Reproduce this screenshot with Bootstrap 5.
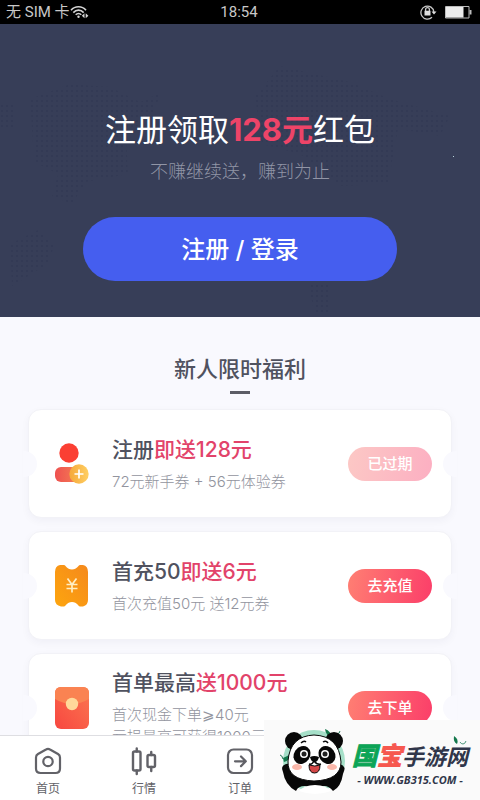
<!DOCTYPE html>
<html lang="zh-CN">
<head>
<meta charset="utf-8">
<meta name="viewport" content="width=device-width, initial-scale=1">
<title>新人限时福利</title>
<link href="https://cdn.jsdelivr.net/npm/bootstrap@5.3.0/dist/css/bootstrap.min.css" rel="stylesheet">
<style>
  body { font-family: Inter, "Noto Sans CJK SC", sans-serif; background: #f9f9fe; color: #50525f; }
  .status-bar { height: 24px; padding: 0 4px 0 6px; background: #000; color: #c8c8c8; font: 15px/24px Roboto, "Noto Sans CJK SC", sans-serif; }
  .status-bar .cell { flex: 1 1 0; }
  .scroller { scrollbar-width: none; min-height: 0; }
  .scroller::-webkit-scrollbar { display: none; }
  .hero { background: #373e58; padding: 83px 0 36px; }
  .hero-map { inset: 0; width: 100%; height: 100%; }
  .hero h1 { font-size: 31px; line-height: 46px; font-weight: 400; color: #fff; }
  .hero h1 strong { color: #ee4468; font-weight: 700; }
  .hero p { font-size: 18px; line-height: 26px; font-weight: 300; color: #9195a6; margin: 6px 0 32px; }
  .btn-login { width: 314px; height: 64px; padding: 2px 0 0; background: #455eef; color: #fff; font-size: 24px; font-weight: 500; }
  .btn-login:hover { background: #3a51d8; color: #fff; }
  .section-title { font-size: 22px; line-height: 32px; font-weight: 500; margin-top: 36px; }
  .title-bar { width: 20px; height: 3px; margin: 6px auto 15px; background: #5c5d66; }
  .offers { padding: 0 28px; gap: 13px; }
  .offer { min-height: 109px; border: 1px solid #f2f2f7; border-radius: 13px; background: #fff; padding: 0 19px 0 25px; box-shadow: 0 3px 8px #2020400a; }
  .offer::before, .offer::after { content: ""; position: absolute; top: 50%; width: 14px; height: 26px; margin-top: -13px; background: #f9f9fe; }
  .offer::before { left: -6px; border-radius: 0 13px 13px 0; }
  .offer::after { right: -6px; border-radius: 13px 0 0 13px; }
  .offer > svg { width: 36px; height: 44px; flex: none; margin-right: 22px; overflow: visible; }
  .offer h3 { font-size: 21px; line-height: 30px; font-weight: 500; margin-bottom: 6px; }
  .offer h3 span { color: #e2436a; }
  .offer p { font-size: 15px; line-height: 22px; font-weight: 300; color: #92949e; margin: 0; }
  .btn-offer { width: 84px; height: 34px; padding: 0; background: linear-gradient(100deg, #ff7f73, #fb3e69); color: #fff; font-size: 15px; line-height: 34px; font-weight: 500; }
  .btn-offer, .btn-offer:hover, .btn-offer:disabled { color: #fff; border: 0; }
  .btn-offer:disabled { background: linear-gradient(100deg, #fcc8c5, #fcafc2); opacity: 1; }
  .tabs { height: 65px; background: #fff; border-top: 1px solid #dedee2; }
  .tabs a { width: 20%; color: #626268; font-size: 12px; line-height: 18px; padding-top: 10px; }
  .tabs svg { width: 30px; height: 30px; margin-bottom: 4px; }
  .site-tag { width: 45%; height: 80px; background: #fafafa; padding-left: 14px; z-index: 2; font-family: "Open Sans", "Noto Sans CJK SC", sans-serif; }
  .site-panda { width: 70px; height: 70px; flex: none; margin-top: 4px; }
  .site-name { font-family: "Noto Sans CJK SC", sans-serif; font-weight: 700; font-style: italic; font-size: 22px; line-height: 34px; color: #30364a; }
  .site-name span { font-size: 25px; -webkit-text-stroke: 1px currentColor; }
  .site-name .g { color: #0ca457; }
  .site-name .r { color: #f6584f; }
  .site-url { font-size: 11px; line-height: 16px; font-weight: 700; font-style: italic; color: #30364a; }
  .site-leaf { width: 16px; height: 12px; right: 12px; top: 14px; }
</style>
<script src="https://cdn.jsdelivr.net/npm/bootstrap@5.3.0/dist/js/bootstrap.bundle.min.js"></script>
</head>
<body>
<div class="d-flex flex-column vh-100 overflow-hidden">
  <header class="status-bar d-flex align-items-center flex-shrink-0">
    <div class="cell d-flex align-items-center"><span>无 SIM 卡</span>
      <svg width="19" height="14" viewBox="0 0 19 14" fill="none" stroke="#d4d4d4" stroke-width="1.6"><path d="M1 5.2C5 .6 12 .6 16 5.2M3.3 7.6c3-3.3 7.400-3.300 10.400 0M5.700 9.800c1.600-1.700 4-1.700 5.600 0"/><circle cx="8.500" cy="11.800" r="1.200" fill="#d4d4d4" stroke="none"/><path d="M14.500 8.200v5l-2.700-2.500zM15.700 8.200v5l2.700-2.500z" fill="#d4d4d4" stroke="none"/></svg>
    </div>
    <div>18:54</div>
    <div class="cell d-flex align-items-center justify-content-end gap-2 pe-1">
      <svg width="17" height="16" viewBox="0 0 17 16" fill="none" stroke="#c8c8c8" stroke-width="1.300"><path d="M12 13.200A6.500 6.500 0 1 1 13.900 8"/><path d="M5.600 7V5.500a1.900 1.900 0 0 1 3.800 0V7"/><path d="M4.500 6.800h6v4.700h-6zM11.500 7.500h5L14 10.500z" fill="#dedede" stroke="none"/></svg>
      <svg width="27" height="13" viewBox="0 0 27 13"><path d="M.5.5h23.500v11.500H.5z" fill="none" stroke="#bbb"/><path d="M1 1h17.500v10.500H1z" fill="#ececec"/><path d="M24.500 4h2v4.500h-2z" fill="#bbb"/></svg>
    </div>
  </header>

  <main class="scroller flex-grow-1 overflow-auto">
    <section class="hero position-relative text-center">
      <svg class="hero-map position-absolute start-0" viewBox="0 0 480 293" preserveAspectRatio="none" aria-hidden="true">
        <defs><pattern id="dots" width="5" height="5" patternUnits="userSpaceOnUse"><path d="M1 1h2v2H1z" fill="#2e3550"/></pattern></defs>
        <path d="M30 75L70 60 110 63 140 78 162 68 150 95 126 108 128 150 86 158 72 180 52 172 58 150 34 138ZM255 72L280 42 350 58 390 75 450 92 440 112 398 105 388 160 340 162 300 130 262 120ZM0 80h16v24H0ZM10 220L38 206 54 222 48 240 12 262ZM308 258h20v30h-14Z" fill="url(#dots)" opacity=".4"/>
        <path d="M453 132h1v1h-1z" fill="#b9d5dc"/>
      </svg>
      <div class="position-relative">
        <h1 class="mb-0">注册领取<strong>128元</strong>红包</h1>
        <p>不赚继续送，赚到为止</p>
        <button type="button" class="btn btn-login rounded-pill border-0">注册 / 登录</button>
      </div>
    </section>

    <h2 class="section-title text-center mb-0">新人限时福利</h2>
    <div class="title-bar"></div>

    <div class="offers d-flex flex-column">
      <article class="offer position-relative d-flex align-items-center">
        <svg viewBox="0 0 36 44" aria-hidden="true">
          <defs><linearGradient id="body" x2="1"><stop stop-color="#ee5150"/><stop offset="1" stop-color="#f68755"/></linearGradient><linearGradient id="coin" x2="1"><stop stop-color="#f5a83b"/><stop offset="1" stop-color="#ffcf62"/></linearGradient></defs>
          <circle cx="15" cy="11" r="9.700" fill="#fb3f33"/><rect x="1" y="25" width="29" height="15" rx="6" fill="url(#body)"/><circle cx="25" cy="32" r="9.700" fill="url(#coin)"/><path d="M25 27.500v9M20.500 32h9" stroke="#fff" stroke-width="1.700"/>
        </svg>
        <div class="flex-grow-1"><h3>注册<span>即送128元</span></h3><p>72元新手券 + 56元体验券</p></div>
        <button type="button" class="btn btn-offer rounded-pill" disabled>已过期</button>
      </article>
      <article class="offer position-relative d-flex align-items-center">
        <svg viewBox="0 0 36 44" aria-hidden="true">
          <defs><linearGradient id="ticket" x1="1" x2="0" y2="1"><stop stop-color="#f5891c"/><stop offset="1" stop-color="#fda50e"/></linearGradient></defs>
          <path d="M6 1h4c2 0 2.500 4.500 8 4.500S24 1 26 1h3q5 1 5 7v28q0 5-5 6.500h-3c-2 0-2.500-4.500-8-4.500s-6 4.500-8 4.500H7Q1 41 1 36V8Q1 2 6 1Z" fill="url(#ticket)"/><path d="M13.500 14.500l4.500 6 4.500-6M18 20v8.500M12.500 20.500h11M12.500 24.500h11" fill="none" stroke="#ffeec4" stroke-width="1.700"/>
        </svg>
        <div class="flex-grow-1"><h3>首充50<span>即送6元</span></h3><p>首次充值50元 送12元券</p></div>
        <button type="button" class="btn btn-offer rounded-pill">去充值</button>
      </article>
      <article class="offer position-relative d-flex align-items-center">
        <svg viewBox="0 0 36 44" aria-hidden="true">
          <defs><linearGradient id="packet" x1="0" x2="1" y1="1" y2="0"><stop stop-color="#f74740"/><stop offset="1" stop-color="#fb7650"/></linearGradient></defs>
          <rect x="1" y="1" width="34" height="42" rx="6" fill="url(#packet)"/><path d="M1 13V7q0-6 6-6h22q6 0 6 6v6q-17 10-34 0Z" fill="#fa8352"/><circle cx="18" cy="18" r="6.200" fill="#ffd99a"/>
        </svg>
        <div class="flex-grow-1"><h3>首单最高<span>送1000元</span></h3><p>首次现金下单⩾40元<br>亏损最高可获得1000元</p></div>
        <button type="button" class="btn btn-offer rounded-pill">去下单</button>
      </article>
    </div>
  </main>

  <nav class="tabs d-flex flex-shrink-0 text-center">
    <a href="#" class="text-decoration-none d-flex flex-column align-items-center"><svg viewBox="0 0 30 30" fill="none" stroke="#626268" stroke-width="2.200" stroke-linejoin="round"><path d="M13 3.500q2-1.200 4 0l8 4.500q2 1.200 2 3.500v11q0 4.500-4.500 4.500h-15Q3 27 3 22.500v-11Q3 9.200 5 8Z"/><circle cx="15" cy="15.500" r="4.700"/></svg>首页</a>
    <a href="#" class="text-decoration-none d-flex flex-column align-items-center"><svg viewBox="0 0 30 30" fill="none" stroke="#626268" stroke-width="2.400" stroke-linecap="round"><rect x="4" y="5.500" width="7.500" height="19" rx="1.500"/><rect x="18.500" y="9" width="7.500" height="12" rx="1.500"/><path d="M7.750 2.500v3M7.750 24.500v3.500M22.250 6v3M22.250 21v4"/></svg>行情</a>
    <a href="#" class="text-decoration-none d-flex flex-column align-items-center"><svg viewBox="0 0 30 30" fill="none" stroke="#626268" stroke-width="2.200" stroke-linecap="round" stroke-linejoin="round"><rect x="3" y="3.500" width="24" height="23.500" rx="5.500"/><path d="M10 15.300h10.500M16 10.500l4.800 4.800-4.800 4.800"/></svg>订单</a>
  </nav>
</div>

<aside class="site-tag position-fixed bottom-0 end-0 d-flex align-items-center">
  <svg class="site-panda" viewBox="0 0 70 70" role="img" aria-label="熊猫">
    <circle cx="36" cy="34" r="31" fill="#a5dfc8"/>
    <path d="M50 9q-3-4-3-7 6 2 7 9ZM5 31q4-1 8-5-1 8-7 9Z" fill="#14784c"/><path d="M58 7q4 0 4-3M2 28q2 0 3 4" stroke="#267957" fill="none"/>
    <circle cx="16" cy="14" r="9" fill="#080808"/><circle cx="56" cy="14" r="9" fill="#080808"/>
    <path d="M5 45q-3-6 3-8 8-2 10 8 18 16 36 0 1-10 8-8 7 2 3 10-2 13-10 17-4-5-9-5-10 4-19 0-7 0-9 5Q7 58 5 45Z" fill="#080808"/>
    <path d="M21 64q5-6 16-6t16 6q-8 3-16 3t-16-3Z" fill="#fff"/>
    <path d="M10 34Q12 9 36 8q25 1 27 27 0 18-27 19-27-1-26-20Z" fill="#fff" stroke="#080808"/>
    <ellipse cx="24" cy="28" rx="8" ry="9.500" fill="#080808" transform="rotate(35 24 28)"/><ellipse cx="49" cy="28" rx="8" ry="9.500" fill="#080808" transform="rotate(-35 49 28)"/>
    <circle cx="26" cy="27" r="4" fill="#fff"/><circle cx="47" cy="27" r="4" fill="#fff"/><circle cx="26" cy="27" r="2.500" fill="#222"/><circle cx="47" cy="27" r="2.500" fill="#222"/>
    <path d="M23 16q3-3 5-1M45 15q3-2 5 1M31 37q3 1 5-3 3 4 7 3" fill="none" stroke="#080808" stroke-width="1.500"/>
    <path d="M32 30q4-2 9 0-1 5-4.500 5T32 30Z" fill="#080808"/><path d="M31 38q6 2 11 0 0 8-5.500 8T31 38Z" fill="#d34646" stroke="#080808"/>
    <ellipse cx="19" cy="40" rx="5" ry="3" fill="#fab7aa"/><ellipse cx="54" cy="40" rx="5" ry="3" fill="#fab7aa"/>
  </svg>
  <div class="text-center text-nowrap mt-1 ms-1">
    <div class="site-name"><span class="g">国</span><span class="r">宝</span>手游网</div>
    <div class="site-url">- WWW.GB315.COM -</div>
  </div>
  <svg class="site-leaf position-absolute" viewBox="0 0 16 12" aria-hidden="true"><path d="M2 2q5 3 3 8-4-2-3-8Z" fill="#14784c"/><path d="M8 8q1 2 3 2 2 0 3-3" stroke="#4c967a" fill="none"/></svg>
</aside>
</body>
</html>
